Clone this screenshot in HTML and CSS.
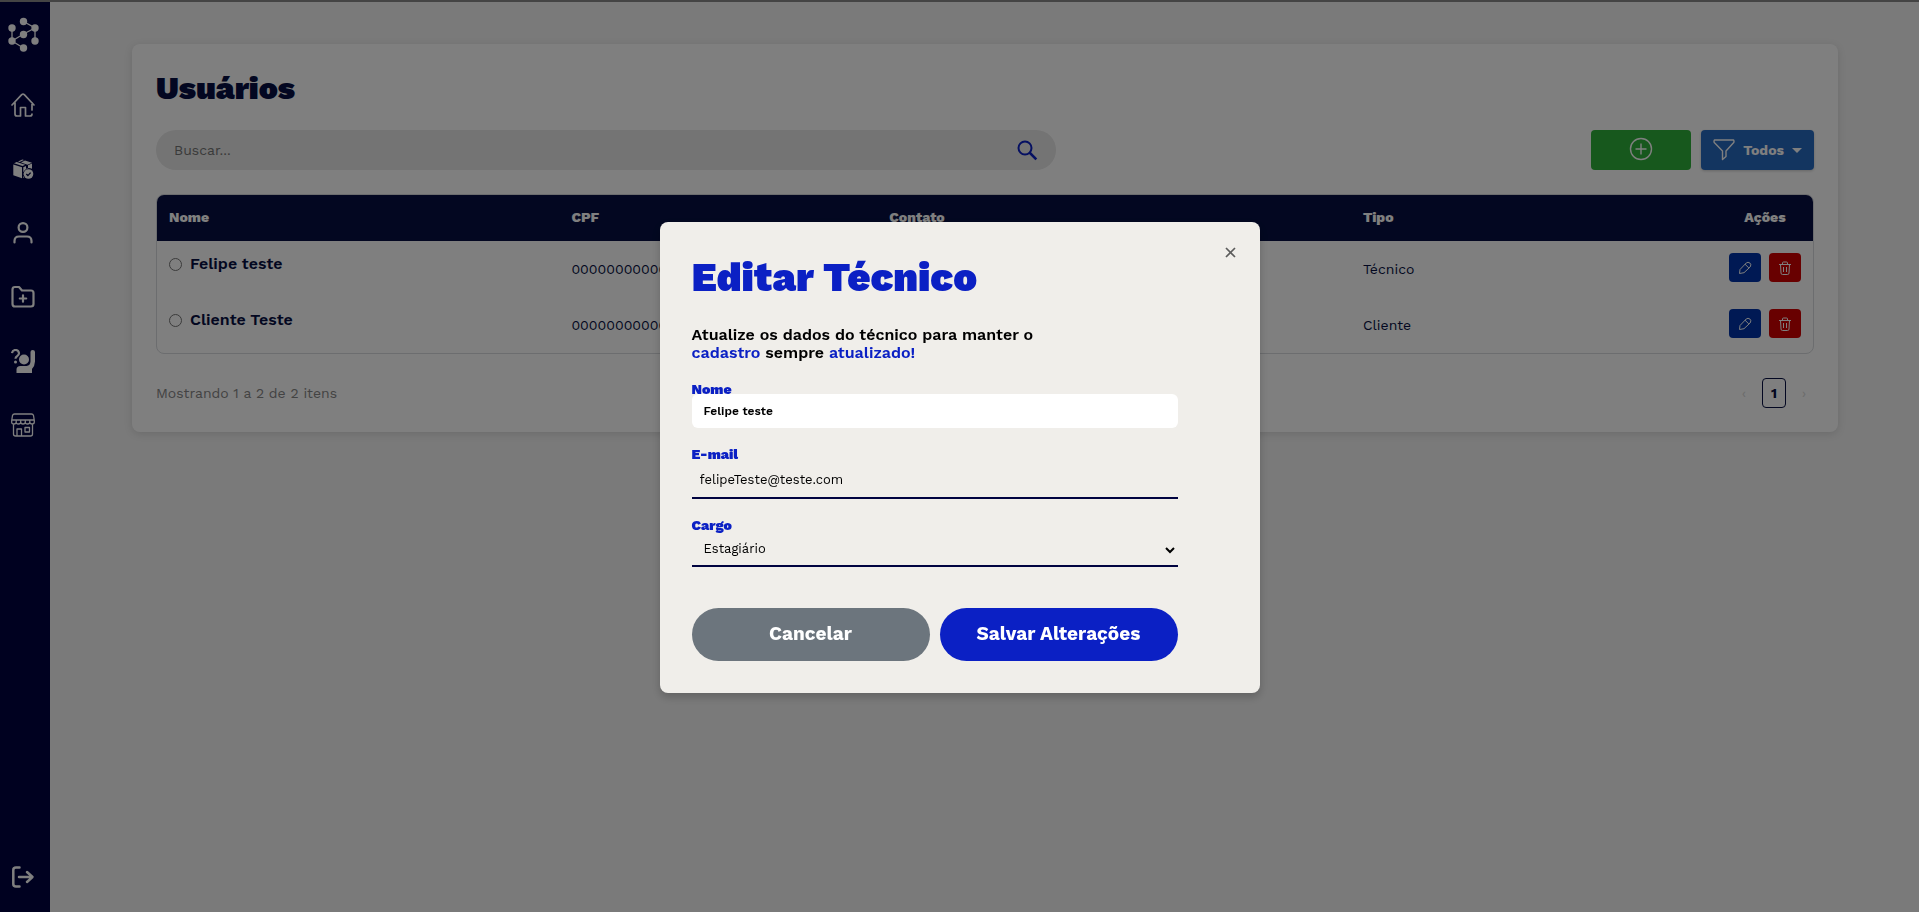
FILE: index.html
```html
<!DOCTYPE html>
<html lang="pt-BR">
<head>
<meta charset="utf-8">
<title>Usuários</title>
<link rel="stylesheet" href="styles.css">
</head>
<body>
<div class="app">
  <nav class="sidebar" aria-label="Principal">
    <a class="logo" href="#" aria-label="Início">
      <svg width="34" height="36" viewBox="0 0 34 36" fill="currentColor"><path d="M6 11v13M6 24l11.500-7 11.500-6M17.500 4.500 29 11v13M6 24l11.500 7" fill="none" stroke="currentColor" stroke-width="1.300"/><circle cx="17.500" cy="4.500" r="3.700"/><circle cx="6" cy="11" r="3.700"/><circle cx="29" cy="11" r="3.700"/><circle cx="17.500" cy="17.500" r="3.700"/><circle cx="6" cy="24" r="3.700"/><circle cx="29" cy="24" r="3.700"/><circle cx="17.500" cy="31" r="3.700"/></svg>
    </a>
    <a href="#" aria-label="Página inicial">
      <svg viewBox="0 0 24 24" fill="none" stroke="currentColor" stroke-width="1.700" stroke-linejoin="round" stroke-linecap="round"><path d="M1 12 10.700 1.700q1.300-1.100 2.600 0L23 12M4 9.500V21q0 2 2 2h3.500v-8.500h5V23H19q2 0 2-2M21 17V9.500"/></svg>
    </a>
    <a href="#" aria-label="Produtos">
      <svg viewBox="0 0 24 24" fill="currentColor"><path d="M2.300 7.500 11 10.300v11L2.300 18.200zM3 6.200 5.700 5l8.500 2.800-2.700 1.300zM7 4.500l4.300-2.100L13 3l-4.300 2.100zM10 5.500 14 3.400l2.300.8L21 5.700l-4.500 2zM12.300 10.300l2.700-1.200v3.400l2-1V8.200l4-1.800v5.400a6 6 0 0 0-7.700 8.800l-1 .5z"/><circle cx="17.500" cy="17" r="4.800"/><path d="m15.300 17 1.600 1.600 2.700-3" fill="none" stroke="#000340" stroke-width="1.400"/></svg>
    </a>
    <a href="#" aria-label="Usuários">
      <svg viewBox="0 0 24 24" fill="none" stroke="currentColor" stroke-width="2.200" stroke-linecap="round"><circle cx="12" cy="6.500" r="4.400"/><path d="M3.500 21.500V20q0-4.500 4.500-4.500h8q4.500 0 4.500 4.500v1.500"/></svg>
    </a>
    <a href="#" aria-label="Novo projeto">
      <svg viewBox="0 0 24 24" fill="none" stroke="currentColor" stroke-width="2.200" stroke-linecap="round" stroke-linejoin="round"><path d="M1.500 4.500q0-2.500 2.500-2.500h4l3 3.500h9q2.500 0 2.500 2.500v11q0 2.500-2.500 2.500H4q-2.500 0-2.500-2.500zM12 10.300v6.400M8.800 13.500h6.400"/></svg>
    </a>
    <a href="#" aria-label="Ajuda">
      <svg viewBox="0 0 24 24" fill="currentColor"><circle cx="13" cy="10.500" r="5"/><path d="M5.500 24v-3.500q0-3.500 4-3.500h6q3.800-.4 4-4.500V3q0-2 2.200-2T24 3v9.500q-.3 5-3 7.500v4z"/><path d="M1 4.200Q1.500 1 4.500 1T8 4.200Q8 6 6 7.200 4.500 8 4.500 9.700" fill="none" stroke="currentColor" stroke-width="2.200"/><circle cx="4.500" cy="13" r="1.500"/></svg>
    </a>
    <a href="#" aria-label="Loja">
      <svg viewBox="0 0 24 24" fill="none" stroke="currentColor" stroke-width="1.300" stroke-linejoin="round"><path d="M3.500 1h17q1.500 0 2 1.500l.8 5V9q0 2-2.200 2t-2.300-2q0 2-2.300 2t-2.200-2q0 2-2.300 2T9.700 9q0 2-2.300 2T5.200 9q0 2-2.300 2T.7 9V7.500l.8-5Q2 1 3.500 1zM.8 7h22.400M5.200 7v2M9.700 7v2M14.300 7v2M18.800 7v2M2.500 11v10q0 2 2 2h15q2 0 2-2V11M6 23v-7h4.500v7M14 14.500h4.500V19H14z"/></svg>
    </a>
    <a class="logout" href="#" aria-label="Sair">
      <svg viewBox="0 0 24 24" fill="none" stroke="currentColor" stroke-width="2.500" stroke-linecap="round" stroke-linejoin="round"><path d="M8.500 2.500H5Q2.300 2.500 2.300 5v14q0 2.500 2.700 2.500h3.500M8 12h13M16 7l5.500 5-5.500 5"/></svg>
    </a>
  </nav>

  <main class="page">
    <section class="card">
      <h1 class="card-title">Usuários</h1>
      <div class="toolbar">
        <div class="search">
          <input class="search-input" type="search" placeholder="Buscar..." aria-label="Buscar">
          <button class="search-button" type="button" aria-label="Pesquisar">
            <svg width="22" height="22" viewBox="0 0 22 22" fill="none" stroke="currentColor" stroke-width="2"><circle cx="9" cy="9" r="6.500"/><path d="m13.500 13.500 6.800 6.800" stroke-width="2.500"/></svg>
          </button>
        </div>
        <div class="actions">
          <button class="btn-add" type="button" aria-label="Adicionar">
            <svg width="24" height="24" viewBox="0 0 24 24" fill="none" stroke="currentColor" stroke-width="1.400"><circle cx="12" cy="12" r="10.500"/><path d="M12 6.500v11M6.500 12h11"/></svg>
          </button>
          <button class="btn-filter" type="button">
            <svg width="22" height="22" viewBox="0 0 22 22" fill="none" stroke="currentColor" stroke-width="1.400" stroke-linejoin="round"><path d="M1.500 1h19q1 1.500 0 2.800L13 12v5.500l-3.500 3V12L1.500 3.800Q.5 2.500 1.500 1z"/></svg>
            <span>Todos</span>
            <span class="caret"></span>
          </button>
        </div>
      </div>

      <div class="table-wrap">
        <table class="table">
          <colgroup><col class="c-name"><col class="c-cpf"><col class="c-contact"><col class="c-type"><col class="c-actions"></colgroup>
          <thead><tr><th>Nome</th><th>CPF</th><th>Contato</th><th>Tipo</th><th class="center">Ações</th></tr></thead>
          <tbody>
            <tr>
              <td><label class="user"><input type="radio" name="user">Felipe teste</label></td>
              <td>00000000000</td><td></td><td>Técnico</td>
              <td><div class="row-actions">
                <button class="icon-btn edit" type="button" aria-label="Editar Felipe teste"><svg width="14" height="14" viewBox="0 0 14 14" fill="none" stroke="currentColor" stroke-linejoin="round"><path d="M1.500 12.500 2 8.500 8.200 2Q10 .5 11.900 2t.2 4L6 11.700zM7 3.200 10.900 7"/></svg></button>
                <button class="icon-btn delete" type="button" aria-label="Excluir Felipe teste"><svg width="14" height="14" viewBox="0 0 14 14" fill="none" stroke="currentColor"><path d="M1 3.500h12M4.500 3.500V2q0-1 1-1h3q1 0 1 1v1.500M2.500 3.500 3 12q0 1.500 1.500 1.500h5q1.500 0 1.500-1.500l.5-8.500M5.500 6v5M8.500 6v5"/></svg></button>
              </div></td>
            </tr>
            <tr>
              <td><label class="user"><input type="radio" name="user">Cliente Teste</label></td>
              <td>00000000000</td><td></td><td>Cliente</td>
              <td><div class="row-actions">
                <button class="icon-btn edit" type="button" aria-label="Editar Cliente Teste"><svg width="14" height="14" viewBox="0 0 14 14" fill="none" stroke="currentColor" stroke-linejoin="round"><path d="M1.500 12.500 2 8.500 8.200 2Q10 .5 11.900 2t.2 4L6 11.700zM7 3.200 10.900 7"/></svg></button>
                <button class="icon-btn delete" type="button" aria-label="Excluir Cliente Teste"><svg width="14" height="14" viewBox="0 0 14 14" fill="none" stroke="currentColor"><path d="M1 3.500h12M4.500 3.500V2q0-1 1-1h3q1 0 1 1v1.500M2.500 3.500 3 12q0 1.500 1.500 1.500h5q1.500 0 1.500-1.500l.5-8.500M5.500 6v5M8.500 6v5"/></svg></button>
              </div></td>
            </tr>
          </tbody>
        </table>
      </div>

      <div class="card-footer">
        <span class="summary">Mostrando 1 a 2 de 2 itens</span>
        <div class="pager">
          <button class="pager-arrow" type="button" disabled aria-label="Anterior">‹</button>
          <button class="pager-page" type="button">1</button>
          <button class="pager-arrow" type="button" disabled aria-label="Próxima">›</button>
        </div>
      </div>
    </section>
  </main>
</div>

<div class="overlay">
  <div class="modal" role="dialog" aria-modal="true" aria-labelledby="modal-title">
    <button class="modal-close" type="button" aria-label="Fechar"><svg width="11" height="11" viewBox="0 0 11 11" stroke="currentColor" stroke-width="1.700"><path d="m1 1 9 9M10 1l-9 9"/></svg></button>
    <h2 class="modal-title" id="modal-title">Editar Técnico</h2>
    <p class="modal-text">Atualize os dados do técnico para manter o<br><span class="accent">cadastro</span> sempre <span class="accent">atualizado!</span></p>
    <form class="form">
      <div class="field field-name">
        <label for="name">Nome</label>
        <input class="input-solid" id="name" type="text" value="Felipe teste">
      </div>
      <div class="field">
        <label for="email">E-mail</label>
        <input class="input-line" id="email" type="email" value="felipeTeste@teste.com">
      </div>
      <div class="field">
        <label for="role">Cargo</label>
        <select class="select-line" id="role"><option>Estagiário</option></select>
      </div>
      <div class="form-actions">
        <button class="btn btn-cancel" type="button">Cancelar</button>
        <button class="btn btn-save" type="button">Salvar Alterações</button>
      </div>
    </form>
  </div>
</div>
</body>
</html>
```
FILE: styles.css
```css
* { box-sizing: border-box; }

body {
  margin: 0;
  font-family: "Work Sans", Inter, sans-serif;
  font-size: 14px;
  color: #060f42;
  background: #f4f4f4;
}

button, input, select { font: inherit; color: inherit; margin: 0; }
button { border: 0; padding: 0; cursor: pointer; }
svg { display: block; }

.app { display: flex; min-height: 100vh; border-top: 2px solid #888; }

.sidebar {
  width: 50px;
  flex: none;
  display: flex;
  flex-direction: column;
  align-items: center;
  gap: 40px;
  padding: 15px 4px 23px 0;
  background: #000340;
}
.sidebar a { color: #fff; }
.sidebar a svg { width: 24px; height: 24px; }
.sidebar .logo svg { width: 34px; height: 36px; }
.sidebar .logout { margin-top: auto; }

.page { flex: 1; padding: 42px 81px 42px 82px; }

.card {
  padding: 24px;
  background: #fff;
  border-radius: 8px;
  box-shadow: 0 2px 8px rgba(0, 0, 0, .12);
}
.card-title { margin: 0 0 22px; font-size: 32px; line-height: 40px; font-weight: 900; }

.toolbar { display: flex; justify-content: space-between; gap: 24px; margin-bottom: 24px; }
.search {
  flex: 0 1 900px;
  display: flex;
  align-items: center;
  height: 40px;
  padding: 0 18px;
  border-radius: 20px;
  background: #e8e8e8;
}
.search-input { flex: 1; min-width: 0; padding: 0; border: 0; outline: 0; background: none; }
.search-input::placeholder { color: #757575; opacity: 1; }
.search-button { background: none; color: #0b20c4; }

.actions { display: flex; gap: 10px; }
.btn-add, .btn-filter { display: flex; align-items: center; height: 40px; border-radius: 4px; color: #fff; }
.btn-add { justify-content: center; width: 100px; padding-bottom: 3px; background: #2eb03a; }
.btn-filter { gap: 8px; padding: 0 12px; background: #276ac0; font-weight: 700; box-shadow: 0 1px 3px rgba(0, 0, 0, .2); }
.caret { border: 5px solid transparent; border-top-color: #fff; border-bottom: 0; }

.table-wrap { border: 1px solid #d8dade; border-radius: 8px; overflow: hidden; }
.table { width: 100%; border-collapse: collapse; table-layout: fixed; }
.c-name { width: 24.3%; }
.c-cpf { width: 19.2%; }
.c-contact { width: 28.6%; }
.c-actions { width: 96px; }
.table th { height: 46px; padding: 0 12px 2px; background: #060f42; color: #fff; text-align: left; font-weight: 800; }
.table th.center { text-align: center; }
.table td { height: 56px; padding: 12px; vertical-align: top; line-height: 32px; }
.user { display: flex; align-items: center; gap: 8px; font-size: 16px; font-weight: 600; line-height: 22px; }
.user input { width: 13px; height: 13px; margin: 0; }
.row-actions { display: flex; gap: 8px; }
.icon-btn { display: flex; align-items: center; justify-content: center; width: 32px; height: 29px; border-radius: 4px; color: #fff; }
.edit { background: #0033a8; }
.delete { background: #d00000; }

.card-footer { display: flex; align-items: center; justify-content: space-between; margin-top: 24px; }
.summary { color: #868686; }
.pager { display: flex; align-items: center; gap: 14px; padding-right: 6px; }
.pager-arrow { width: 8px; background: none; color: #d8d8d8; }
.pager-page { width: 24px; height: 30px; border: 1px solid #060f42; border-radius: 4px; background: none; font-weight: 700; }

.overlay {
  position: fixed;
  inset: 0;
  display: flex;
  align-items: center;
  justify-content: center;
  padding-top: 2px;
  background: rgba(0, 0, 0, .5);
}
.modal {
  position: relative;
  width: 600px;
  max-width: 100%;
  padding: 32px;
  border-radius: 8px;
  background: #f0eeea;
  color: #000;
  box-shadow: 0 4px 10px rgba(0, 0, 0, .2);
}
.modal-close { position: absolute; top: 25px; right: 24px; background: none; color: #5c5c5c; }
.modal-title { margin: 0 0 24px; font-size: 40px; line-height: 48px; font-weight: 900; color: #0b20c4; }
.modal-text { margin: 0 0 19px; font-size: 16px; line-height: 18px; font-weight: 600; }
.accent { color: #0b20c4; }

.form { padding-right: 50px; }
.field { display: flex; flex-direction: column; margin-bottom: 18px; }
.field label { font-size: 14px; line-height: 16px; font-weight: 900; color: #0b20c4; }
.field-name label { height: 13px; }
.input-solid { position: relative; height: 34px; padding: 0 12px; border: 0; border-radius: 6px; background: #fff; font-size: 12px; font-weight: 600; }
.input-line { height: 37px; padding: 0 8px; border: 0; border-bottom: 2px solid #000340; background: none; font-size: 13px; }
.select-line { height: 34px; padding: 0 8px; border: 0; border-bottom: 2px solid #000340; background: none; font-size: 13px; }
.form-actions { display: flex; gap: 10px; margin-top: 41px; }
.btn { flex: 1; height: 53px; padding-bottom: 2px; border-radius: 27px; color: #fff; font-size: 19px; font-weight: 700; }
.btn-cancel { background: #6c757d; }
.btn-save { background: #0b20c4; }
```
